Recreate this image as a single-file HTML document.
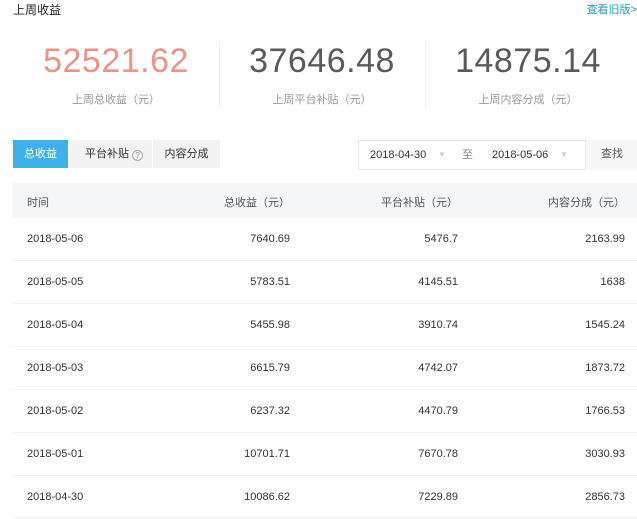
<!DOCTYPE html>
<html><head><meta charset="utf-8"><style>
*{margin:0;padding:0;box-sizing:border-box}
body{width:637px;height:502px;overflow:hidden;background:#fff;font-family:"Liberation Sans","Noto Sans CJK SC",sans-serif;color:#333;position:relative}
.a{position:absolute}
.big{position:absolute;top:42px;font-size:34px;font-weight:300;width:206px;text-align:center;color:#5a5a5a;letter-spacing:0.5px}
.lbl{position:absolute;top:91px;font-size:11px;color:#999;width:206px;text-align:center}
.vd{position:absolute;top:42px;height:66px;width:1px;background:#f0f0f0}
.row{position:absolute;left:13px;width:624px;height:43px;border-bottom:1px solid #f0f2f4;font-size:11px;color:#333}
.row span{position:absolute;top:15px}
.c1{left:14px}.c2{right:347px}.c3{right:179px}.c4{right:12px}
</style></head><body>
<div class="a" style="left:13px;top:1px;font-size:12px;color:#222">上周收益</div>
<div class="a" style="right:0;top:1px;font-size:11px;color:#2a9bb0">查看旧版&gt;</div>
<div class="big" style="left:13px;color:#e99489">52521.62</div>
<div class="big" style="left:219px">37646.48</div>
<div class="big" style="left:425px">14875.14</div>
<div class="lbl" style="left:13px">上周总收益（元）</div>
<div class="lbl" style="left:219px">上周平台补贴（元）</div>
<div class="lbl" style="left:425px">上周内容分成（元）</div>
<div class="vd" style="left:219px"></div><div class="vd" style="left:425px"></div>

<div class="a" style="left:13px;top:140px;width:55px;height:28px;background:#3eb1ea;color:#fff;font-size:11px;text-align:center;line-height:28px">总收益</div>
<div class="a" style="left:68px;top:140px;width:84px;height:28px;background:#f2f2f2;font-size:11px;line-height:28px;padding-left:17px">平台补贴 <span style="display:inline-block;width:11px;height:11px;border:1px solid #aaa;border-radius:50%;font-size:8px;line-height:9px;text-align:center;color:#999;vertical-align:-1px">?</span></div>
<div class="a" style="left:152px;top:140px;width:68px;height:28px;background:#f2f2f2;border-left:1px solid #fff;font-size:11px;line-height:28px;text-align:center">内容分成</div>

<div class="a" style="left:358px;top:140px;width:279px;height:30px;border:1px solid #e6e6e6;font-size:11px;line-height:28px">
<span class="a" style="left:11px">2018-04-30</span><span class="a" style="left:79px;color:#ccc;font-size:8px">▼</span>
<span class="a" style="left:103px;color:#888">至</span>
<span class="a" style="left:133px">2018-05-06</span><span class="a" style="left:201px;color:#ccc;font-size:8px">▼</span>
<span class="a" style="left:226px;top:-1px;width:53px;height:30px;background:#f7f7f7;border-left:1px solid #e6e6e6;text-align:center;color:#555">查找</span>
</div>

<div class="a" style="left:13px;top:183px;width:624px;height:35px;background:#f4f6f8;font-size:11px;color:#555">
<span class="a" style="left:14px;top:11px">时间</span>
<span class="a" style="right:347px;top:11px">总收益（元）</span>
<span class="a" style="right:179px;top:11px">平台补贴（元）</span>
<span class="a" style="right:12px;top:11px">内容分成（元）</span>
</div>
<div class="row" style="top:218px"><span class="c1">2018-05-06</span><span class="c2">7640.69</span><span class="c3">5476.7</span><span class="c4">2163.99</span></div>
<div class="row" style="top:261px"><span class="c1">2018-05-05</span><span class="c2">5783.51</span><span class="c3">4145.51</span><span class="c4">1638</span></div>
<div class="row" style="top:304px"><span class="c1">2018-05-04</span><span class="c2">5455.98</span><span class="c3">3910.74</span><span class="c4">1545.24</span></div>
<div class="row" style="top:347px"><span class="c1">2018-05-03</span><span class="c2">6615.79</span><span class="c3">4742.07</span><span class="c4">1873.72</span></div>
<div class="row" style="top:390px"><span class="c1">2018-05-02</span><span class="c2">6237.32</span><span class="c3">4470.79</span><span class="c4">1766.53</span></div>
<div class="row" style="top:433px"><span class="c1">2018-05-01</span><span class="c2">10701.71</span><span class="c3">7670.78</span><span class="c4">3030.93</span></div>
<div class="row" style="top:476px"><span class="c1">2018-04-30</span><span class="c2">10086.62</span><span class="c3">7229.89</span><span class="c4">2856.73</span></div>
</body></html>
